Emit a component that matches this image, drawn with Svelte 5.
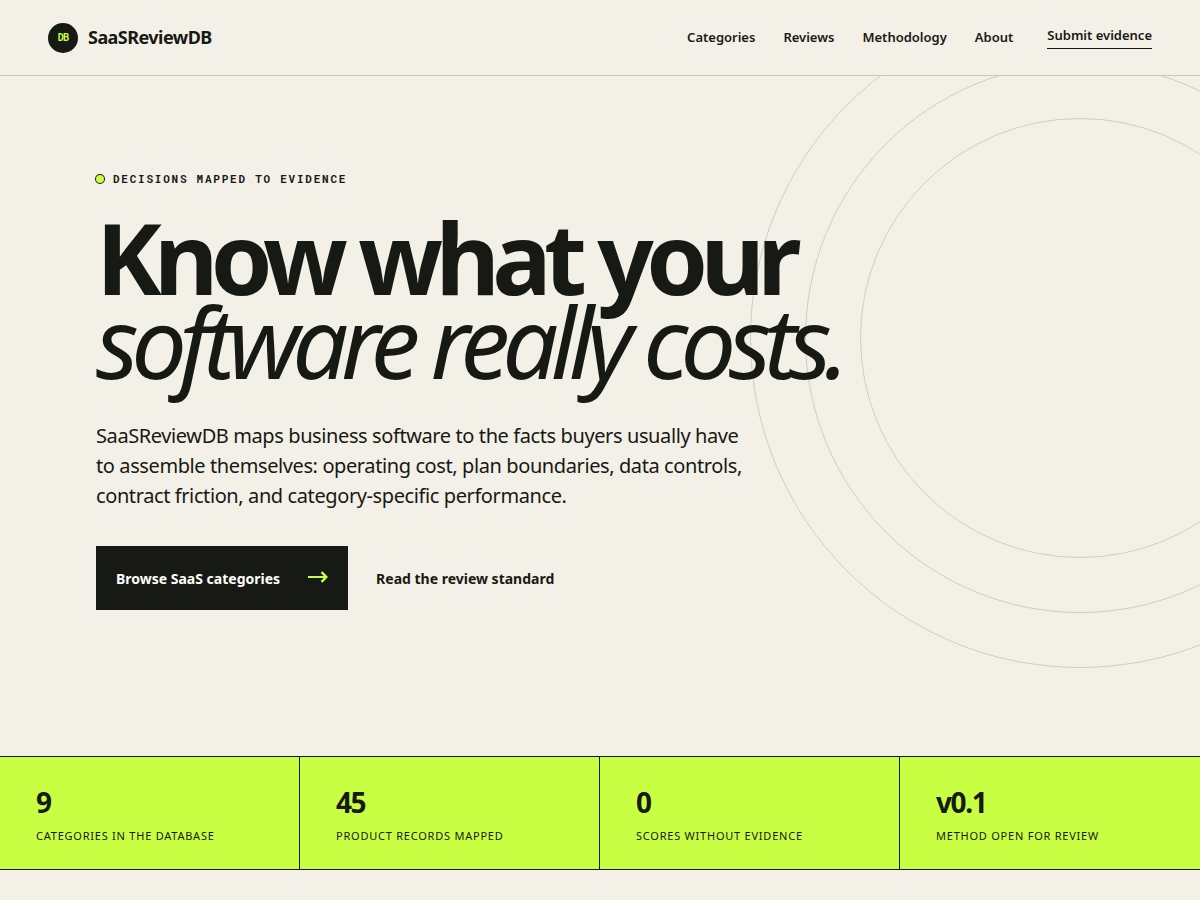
<script lang="ts">
	const links = ['Categories', 'Reviews', 'Methodology', 'About'];

	const stats = [
		{ value: '9', label: 'Categories in the database' },
		{ value: '45', label: 'Product records mapped' },
		{ value: '0', label: 'Scores without evidence' },
		{ value: 'v0.1', label: 'Method open for review' }
	];
</script>

<header class="site-header">
	<a class="brand" href="/">
		<span class="brand-mark" aria-hidden="true">DB</span>
		<span>SaaSReviewDB</span>
	</a>
	<nav aria-label="Main">
		{#each links as link}
			<a href="#{link.toLowerCase()}">{link}</a>
		{/each}
		<a class="submit" href="#submit">Submit evidence</a>
	</nav>
</header>

<main>
	<section class="hero">
		<svg class="rings" width="660" height="660" viewBox="0 0 660 660" fill="none" stroke="currentColor" aria-hidden="true">
			<circle cx="330" cy="330" r="219.5" />
			<circle cx="330" cy="330" r="274.5" />
			<circle cx="330" cy="330" r="329.5" />
		</svg>
		<div class="hero-copy">
			<p class="eyebrow"><span class="dot"></span>Decisions mapped to evidence</p>
			<h1>Know what your<br /><em>software really costs.</em></h1>
			<p class="lede">
				SaaSReviewDB maps business software to the facts buyers usually have to assemble
				themselves: operating cost, plan boundaries, data controls, contract friction, and
				category-specific performance.
			</p>
			<div class="actions">
				<a class="primary" href="#categories">
					Browse SaaS categories
					<svg width="20" height="14" viewBox="0 0 20 14" fill="none" stroke="currentColor" stroke-width="2" aria-hidden="true">
						<path d="M0 6H18" />
						<path d="M13.5 1.2L18.4 6L13.5 10.8" stroke-width="2.4" />
					</svg>
				</a>
				<a class="secondary" href="#methodology">Read the review standard</a>
			</div>
		</div>
	</section>

	<dl class="stats">
		{#each stats as stat}
			<div class="stat">
				<dt>{stat.label}</dt>
				<dd>{stat.value}</dd>
			</div>
		{/each}
	</dl>
</main>

<style>
	:global(body) {
		--ink: #171914;
		--paper: #f3f0e8;
		--lime: #c8ff43;
		--line: #c7c5bd;
		--mono: 'Roboto Mono', 'DejaVu Sans Mono', monospace;
		background: var(--paper);
		color: var(--ink);
		font-family: 'Noto Sans', sans-serif;
		line-height: 24px;
	}
	a {
		color: inherit;
		text-decoration: none;
	}
	.site-header {
		display: flex;
		align-items: center;
		justify-content: space-between;
		height: 75px;
		padding: 0 48px;
		border-bottom: 1px solid var(--line);
	}
	.brand {
		display: flex;
		align-items: center;
		gap: 10px;
		font-size: 18px;
		font-weight: 700;
		line-height: 23px;
		letter-spacing: -0.03em;
	}
	.brand-mark {
		display: grid;
		place-items: center;
		width: 30px;
		height: 30px;
		border-radius: 50%;
		background: var(--ink);
		color: var(--lime);
		font-family: var(--mono);
		font-size: 10px;
		letter-spacing: -0.08em;
	}
	nav {
		display: flex;
		align-items: center;
		gap: 28px;
		font-size: 13px;
		font-weight: 600;
		line-height: 19px;
	}
	.submit {
		margin-left: 6px;
		padding-bottom: 3px;
		border-bottom: 1px solid var(--ink);
	}
	.hero {
		position: relative;
		min-height: 680px;
		box-sizing: border-box;
		padding: 95px 96px;
		overflow: hidden;
	}
	.rings {
		position: absolute;
		top: -68px;
		right: -210px;
		color: #d0cdc5;
	}
	.hero-copy {
		position: relative;
	}
	.eyebrow {
		display: flex;
		align-items: center;
		gap: 9px;
		margin: 0 0 28px;
		font-family: var(--mono);
		font-size: 11px;
		font-weight: 700;
		line-height: 16px;
		letter-spacing: 0.16em;
		text-transform: uppercase;
	}
	.dot {
		width: 8px;
		height: 8px;
		border-radius: 50%;
		background: var(--lime);
		box-shadow: 0 0 0 1px var(--ink);
	}
	h1 {
		margin: 0;
		font-size: 99px;
		font-weight: 700;
		line-height: 84px;
		letter-spacing: -0.077em;
	}
	h1 em {
		font-weight: 400;
	}
	.lede {
		max-width: 660px;
		margin: 38px 0 35px;
		font-size: 20px;
		line-height: 30px;
		letter-spacing: -0.02em;
	}
	.actions {
		display: flex;
		align-items: center;
		gap: 28px;
		font-size: 14px;
		font-weight: 700;
	}
	.actions a {
		padding: 21px 0 19px;
	}
	.actions .primary {
		display: flex;
		align-items: center;
		gap: 28px;
		padding-inline: 20px;
		background: var(--ink);
		color: #fff;
	}
	.primary svg {
		margin-bottom: 2px;
		color: var(--lime);
	}
	.stats {
		display: grid;
		grid-template-columns: repeat(4, 1fr);
		margin: 0;
		border-block: 1px solid var(--ink);
		background: var(--lime);
	}
	.stat {
		display: flex;
		flex-direction: column-reverse;
		justify-content: flex-end;
		gap: 8px;
		padding: 27px 36px 25px;
		border-right: 1px solid var(--ink);
	}
	.stat:last-child {
		border-right: 0;
	}
	dt {
		font-size: 11px;
		line-height: 16px;
		letter-spacing: 0.07em;
		text-transform: uppercase;
	}
	dd {
		margin: 0;
		font-size: 28px;
		font-weight: 700;
		line-height: 36px;
		letter-spacing: -0.05em;
	}
</style>
